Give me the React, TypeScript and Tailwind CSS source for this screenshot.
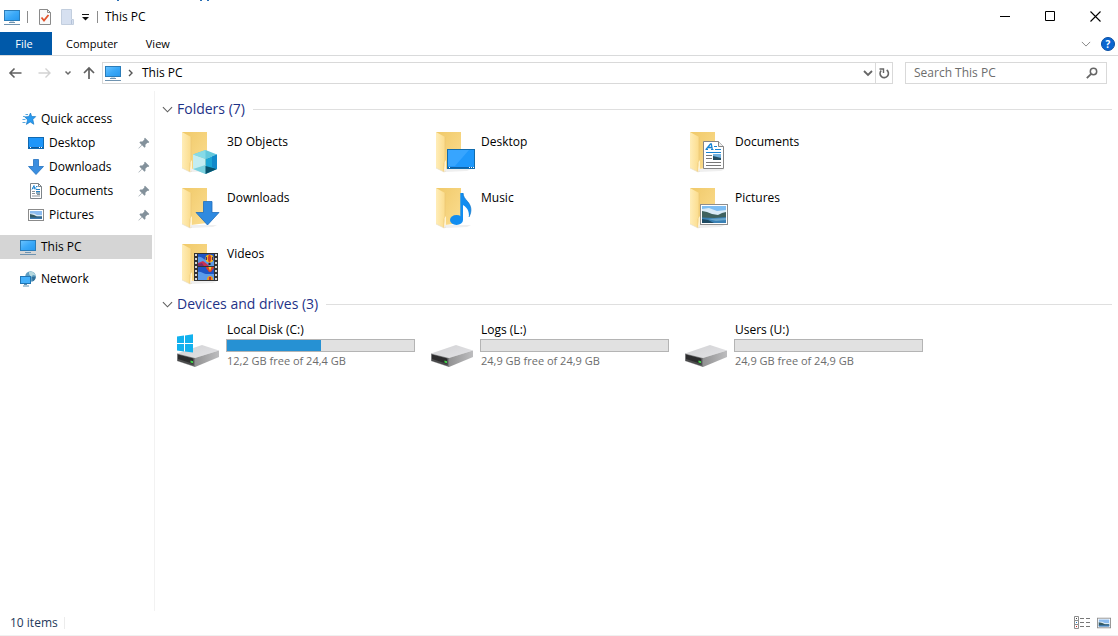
import React from "react";

type IconProps = { className?: string };

function Monitor({ className = "w-4 h-4" }: IconProps) {
  return (
    <svg viewBox="0 0 16 16" className={className} aria-hidden="true">
      <defs>
        <linearGradient id="screen" x1="0" y1="0" x2="1" y2="1">
          <stop offset="0" stopColor="#6cc4ff" />
          <stop offset="0.5" stopColor="#3ba9f8" />
          <stop offset="1" stopColor="#2597ee" />
        </linearGradient>
      </defs>
      <rect x="0.5" y="1.5" width="15" height="10" fill="url(#screen)" stroke="#2b7cb8" />
      <path d="M5 13.5h6M0 15.5h16" stroke="#6f93b0" />
      <path d="M6 12.5h4" stroke="#c9dbe8" />
    </svg>
  );
}

function Star() {
  return (
    <svg viewBox="0 0 16 16" className="w-4 h-4" aria-hidden="true">
      <path d="M9.5 2l1.200 3.600h4L11.800 8.500l1 4.800-3.600-2.400-3.800 2.500 1.200-4.500-2.800-3 4-.3z" fill="#2a9bf0" stroke="#1878c4" strokeWidth="0.7" />
      <path d="M4.500 3.500h2.500M2 5.500h2M1.500 8.500h3M1.500 11.500h3" stroke="#5aa8de" />
    </svg>
  );
}

function DesktopSmall() {
  return (
    <svg viewBox="0 0 16 16" className="w-4 h-4" aria-hidden="true">
      <rect x="0.5" y="2.5" width="15" height="11" fill="#1e96fa" stroke="#1169b0" />
      <path d="M1 12.5h14" stroke="#10599a" />
      <path d="M2 12.5h1M11 12.5h1M13 12.5h1" stroke="#fff" />
    </svg>
  );
}

function DownloadSmall() {
  return (
    <svg viewBox="0 0 16 16" className="w-4 h-4" aria-hidden="true">
      <path d="M5.5.5h5v7h5L8 15.5.5 7.500h5z" fill="#3a8ee0" stroke="#2272c0" strokeWidth="0.8" />
    </svg>
  );
}

function DocumentSmall() {
  return (
    <svg viewBox="0 0 16 16" className="w-4 h-4" aria-hidden="true">
      <path d="M2.500.5h8l3 3v12h-11z" fill="#fff" stroke="#7d8489" />
      <path d="M10.500.5v3h3" fill="none" stroke="#7d8489" />
      <path d="M4 6.500L6 2.500l1 4M4.500 5h4M8 3.500h1.500" fill="none" stroke="#2187d4" />
      <path d="M4 8.500h3M4 10.500h3M4 13h8M9 11.500h3" stroke="#8a939a" />
      <path d="M8 6.500h4M8 8.500h4" stroke="#2583c5" />
      <path d="M8 10h4" stroke="#1a5578" />
    </svg>
  );
}

function PictureSmall({ className = "w-4 h-4" }: IconProps) {
  return (
    <svg viewBox="0 0 16 16" className={className} aria-hidden="true">
      <rect x="0.5" y="2.5" width="15" height="11" fill="#fff" stroke="#8b8b8b" />
      <path d="M2 4h12v8H2z" fill="#8cbcf0" />
      <path d="M2 6.500h4l3 1.500h5v1H2z" fill="#dbeaf4" />
      <path d="M2 7l4 1 3 1.500h5V11H2z" fill="#355a62" />
      <path d="M2 10.500h12V12H2z" fill="#3b78b0" />
    </svg>
  );
}

function NetworkIcon() {
  return (
    <svg viewBox="0 0 16 16" className="w-4 h-4" aria-hidden="true">
      <circle cx="10.500" cy="5.500" r="5.300" fill="#5f9dc0" />
      <path d="M9 .6c3-.8 6 1.400 6.600 4L13 4l-2 2-2-3z" fill="#b5d8df" />
      <path d="M12 6l3.700-.5c0 2-1 4-3 5z" fill="#316f99" />
      <rect x="0.500" y="5.500" width="10" height="7" fill="#45b1fb" stroke="#2176b4" />
      <path d="M4 13.500h3M3 15h6" stroke="#5e8fae" />
    </svg>
  );
}

function Pin() {
  return (
    <svg viewBox="0 0 12 12" className="w-3 h-3" aria-hidden="true">
      <path d="M7 .7L11.300 5l-1 .9-.9-.2-2 2 .1 2.100-1 .9-2.400-2.400L.8 11.600l-.4-.4 3.300-3.300L1.400 5.500l.9-1 2.100.1 2-2-.2-1z" fill="#83919b" />
    </svg>
  );
}

function Chevron({ className = "w-3 h-3 text-[#5f5f5f]" }: IconProps) {
  return (
    <svg viewBox="0 0 12 12" className={className} aria-hidden="true">
      <path d="M1 3.500l5 5 5-5" fill="none" stroke="currentColor" strokeWidth="1.200" />
    </svg>
  );
}

// Shared folder body, the child is drawn over its lower right corner
function Folder({ children }: { children: React.ReactNode }) {
  return (
    <svg viewBox="0 0 48 48" className="w-12 h-12 shrink-0" aria-hidden="true">
      <defs>
        <linearGradient id="folderBack" x1="0" y1="0" x2="1" y2="1">
          <stop offset="0" stopColor="#f0c969" />
          <stop offset="1" stopColor="#fbdd90" />
        </linearGradient>
        <linearGradient id="folderFront" x1="0" y1="0" x2="1" y2="0">
          <stop offset="0" stopColor="#ffedb8" />
          <stop offset="1" stopColor="#fbdc8c" />
        </linearGradient>
      </defs>
      <path d="M16 41h26l-4 2-22 1z" fill="#efefef" />
      <path d="M7 4h25v35l-16 2z" fill="url(#folderBack)" />
      <path d="M7 4l9 5v24l-1 2v9L7 40z" fill="url(#folderFront)" />
      <path d="M16 9v24l-1 2v9" fill="none" stroke="#e9c472" strokeWidth="0.600" />
      <path d="M15.500 34l1.500-2v9h-1.500z" fill="#fff3cf" />
      <path d="M7 40l8 4 2-1" fill="none" stroke="#e4dcc8" strokeWidth="0.600" />
      {children}
    </svg>
  );
}

function CubeArt() {
  return (
    <>
      <path d="M18 26.500L30.500 22 42 26.500 30.500 31z" fill="#63c8dc" />
      <path d="M18 26.500L30.500 31v15L18 41z" fill="#c3edf2" />
      <path d="M42 26.500L30.500 31v15L42 41z" fill="#1ba5d5" />
      <path d="M18 26.500L30.500 22v9z" fill="#86dae7" />
      <path d="M18 41l12.500-4v9z" fill="#7bd1df" />
      <path d="M30.500 38L42 41l-11.500 5z" fill="#07536d" />
      <path d="M37 28.500l5-2V41l-5-2z" fill="#1289ca" />
    </>
  );
}

function DesktopArt() {
  return (
    <>
      <rect x="18.500" y="21.500" width="27" height="19" fill="#1f98fb" stroke="#116cad" />
      <path d="M19 22h21L26 38h-7z" fill="#37a5ff" />
      <path d="M19 39.500h26" stroke="#0d61a8" />
      <path d="M20 39.500h1M40 39.500h1M42 39.500h1M44 39.500h1" stroke="#fff" />
    </>
  );
}

function DocumentArt() {
  return (
    <>
      <path d="M20.500 13.500h15l5 5v22h-20z" fill="#fff" stroke="#858585" />
      <path d="M35.500 13.500v5h5" fill="#eee" stroke="#858585" />
      <path d="M23 21.500l4.500-5.500h.8l1 5.500M25 19.500h4" fill="none" stroke="#1683d3" strokeWidth="1.300" />
      <path d="M22.500 21.500h2.500M28 21.500h2.500M31 18.500h3M32 21.500h6M23 24.500h15" stroke="#1683d3" />
      <path d="M23 27.500h6M23 30.500h6M23 34.500h15M23 37.500h15" stroke="#777" />
      <path d="M30 26h8v6h-8z" fill="#72b2df" />
      <path d="M30 28l4 1 4 1v2h-8z" fill="#254e62" />
    </>
  );
}

function DownloadArt() {
  return (
    <path d="M28.500 17.500h8.500v11h7L32.500 41 21 28.500h7.500z" fill="#2f8ae0" stroke="#1e6dbc" strokeWidth="0.800" />
  );
}

function MusicArt() {
  return (
    <>
      <ellipse cx="27.500" cy="36" rx="6.500" ry="5" fill="#128df0" />
      <path d="M31.300 9H34c.3 4 2 5.500 4.500 8.500 3.500 4 4.800 9 1.500 15.500 0-5-.5-8.500-6-12v15h-2.700z" fill="#128df0" />
      <path d="M34 9c.3 4 2 5.500 4.500 8.500 3.500 4 4.800 9 1.500 15.500" fill="none" stroke="#0970c4" strokeWidth="0.700" />
    </>
  );
}

function PictureArt() {
  return (
    <>
      <rect x="17.500" y="20.500" width="27" height="20" fill="#fff" stroke="#8d8d8d" />
      <path d="M19 22h24v17H19z" fill="#7dbdf2" />
      <path d="M19 25l7-1 8 3 9-1v6H19z" fill="#d9ebf8" />
      <path d="M19 27l5 1 5 2 6 1 4-2 4-1v6H19z" fill="#3f625f" />
      <path d="M19 33.500l12 .5 12-1v6H19z" fill="#3a80b4" />
      <path d="M25 35l18-1v2l-10 1z" fill="#6aa6cc" />
      <path d="M19 35l6 1 6 3H19z" fill="#1d4a63" />
    </>
  );
}

function VideoArt() {
  return (
    <>
      <path d="M19 13h24v28H19z" fill="#333" />
      <path d="M21 14v27M41 14v27" stroke="#d6d6d6" strokeWidth="2" strokeDasharray="2 2" />
      <path d="M23 14h16v12H23zM23 27h16v13H23z" fill="#1f55c4" />
      <path d="M23 17c4-1 5 3 9 3l7 1v5H23z" fill="#5b9bea" />
      <path d="M23 32c3-1 5 2 8 2h8v6H23z" fill="#5b9bea" />
      <path d="M23 23l5-2 4 3 2 2H23z" fill="#c93050" />
      <path d="M23 24l4-1 2 3h-6z" fill="#7b2a6c" />
      <ellipse cx="34.500" cy="18.500" rx="4" ry="4" fill="#efb521" />
      <path d="M34 14.500c-1.500 2.500-1.500 5.500 0 8h1c1.500-2.500 1.500-5.500 0-8z" fill="#d63b25" />
      <path d="M31.500 17v3M37.500 17v3" stroke="#4a2b64" />
      <path d="M33.500 23h2v2h-2z" fill="#312015" />
      <path d="M31 27h8c0 2-2 3-3 5h-2c-1-2-3-3-3-5z" fill="#d9402c" />
      <path d="M33.500 27h3L35 31z" fill="#f2ce2b" />
      <path d="M32 39c0-4 6-4 6 0v1h-6z" fill="#e59a20" />
      <path d="M34 37h2v3h-2z" fill="#c92f28" />
    </>
  );
}

function Drive({ system }: { system?: boolean }) {
  return (
    <svg viewBox="0 0 48 48" className="w-12 h-12 shrink-0" aria-hidden="true">
      <defs>
        <linearGradient id="driveTop" x1="0" y1="0" x2="1" y2="1">
          <stop offset="0" stopColor="#d2d2d4" />
          <stop offset="1" stopColor="#e3e3e6" />
        </linearGradient>
        <linearGradient id="driveSide" x1="0" y1="0" x2="1" y2="0">
          <stop offset="0" stopColor="#929293" />
          <stop offset="1" stopColor="#bdbdbf" />
        </linearGradient>
      </defs>
      <path d="M2 31.500L27 23l17 5.500L20 36z" fill="url(#driveTop)" />
      <path d="M20 36l24-7.500V35L20 45z" fill="url(#driveSide)" />
      <path d="M2 31.500L20 36v9L2 39z" fill="#77787a" />
      <path d="M3 32.500l15.500 4v7L3 38.500z" fill="#2c2c2d" />
      <path d="M3 37l15.500 5v1.500L3 38.500z" fill="#4d4d4e" />
      <path d="M15.500 38.500l2.500.7v2l-2.500-.7z" fill="#42d94b" />
      {system && (
        <path d="M2 14.500l7-1V21H2zM10 13.400l8-1.200V21h-8zM2 22h7v7.500l-7-1zM10 22h8v8.500l-8-1z" fill="#12b1ee" />
      )}
    </svg>
  );
}

const QUICK_ACCESS = [
  { name: "Desktop", icon: <DesktopSmall /> },
  { name: "Downloads", icon: <DownloadSmall /> },
  { name: "Documents", icon: <DocumentSmall /> },
  { name: "Pictures", icon: <PictureSmall /> },
];

const FOLDERS = [
  { name: "3D Objects", art: <CubeArt /> },
  { name: "Desktop", art: <DesktopArt /> },
  { name: "Documents", art: <DocumentArt /> },
  { name: "Downloads", art: <DownloadArt /> },
  { name: "Music", art: <MusicArt /> },
  { name: "Pictures", art: <PictureArt /> },
  { name: "Videos", art: <VideoArt /> },
];

const DRIVES = [
  { name: "Local Disk (C:)", info: "12,2 GB free of 24,4 GB", used: 50, system: true },
  { name: "Logs (L:)", info: "24,9 GB free of 24,9 GB", used: 0, system: false },
  { name: "Users (U:)", info: "24,9 GB free of 24,9 GB", used: 0, system: false },
];

function TitleBar() {
  return (
    <header className="relative flex h-8 items-center">
      <svg viewBox="0 0 220 2" className="absolute left-0 top-0 h-0.5 w-[220px]" aria-hidden="true">
        <path d="M117 0h2v1h-2zM200 0h2v1h-2zM207 0h2v1h-2z" fill="#2a6fb5" />
      </svg>
      <div className="flex flex-1 items-center pt-px pl-1">
        <Monitor />
        <span className="ml-[7px] h-3 w-px bg-[#8c8c8c]" />
        <button aria-label="Properties" className="ml-[11px]">
          <svg viewBox="0 0 12 16" className="h-4 w-3">
            <path d="M.5.5h8l3 3v12H.5z" fill="#fafafa" stroke="#8a8a8a" />
            <path d="M8.500.5v3h3" fill="none" stroke="#8a8a8a" />
            <path d="M2.500 8.500l2.500 3 4.500-5.500" fill="none" stroke="#e2532b" strokeWidth="1.800" />
          </svg>
        </button>
        <button aria-label="New folder" className="ml-[10px]">
          <svg viewBox="0 0 13 16" className="h-4 w-[13px]">
            <path d="M.5.5h10v10h2v5H.5z" fill="#d6e0f0" stroke="#c2cede" />
            <path d="M10.500 11v4" stroke="#b4c2d8" />
          </svg>
        </button>
        <button aria-label="Customize Quick Access Toolbar" className="ml-2">
          <svg viewBox="0 0 7 8" className="h-2 w-[7px]">
            <path d="M0 1.500h7" stroke="#111" />
            <path d="M0 4h7L3.500 7.500z" fill="#111" />
          </svg>
        </button>
        <span className="ml-2 h-3 w-px bg-[#8c8c8c]" />
        <h1 className="ml-[7px]">This PC</h1>
      </div>
      <button aria-label="Minimize" className="flex h-8 w-[45px] items-center justify-center">
        <svg viewBox="0 0 11 11" className="h-[11px] w-[11px]"><path d="M0 5.500h10" stroke="#000" /></svg>
      </button>
      <button aria-label="Maximize" className="flex h-8 w-[45px] items-center justify-center">
        <svg viewBox="0 0 11 11" className="h-[11px] w-[11px]"><path d="M.5.5h9v9h-9z" fill="none" stroke="#000" /></svg>
      </button>
      <button aria-label="Close" className="flex h-8 w-[45px] items-center justify-center">
        <svg viewBox="0 0 11 11" className="h-[11px] w-[11px]"><path d="M.5.5l10 10M10.500.5l-10 10" stroke="#000" strokeWidth="1.100" /></svg>
      </button>
    </header>
  );
}

function Ribbon() {
  return (
    <nav className="flex h-6 items-center border-b border-[#d9dadb] text-[11px]">
      <button className="h-full w-[52px] bg-[#0059a9] pr-1 text-white">File</button>
      <button className="ml-[14px]">Computer</button>
      <button className="ml-7">View</button>
      <div className="ml-auto flex items-center gap-[10px] pr-[3px]">
        <button aria-label="Expand the Ribbon">
          <Chevron className="h-[10px] w-[10px] text-[#8a8a8a]" />
        </button>
        <button aria-label="Help" className="h-[14px] w-[14px] rounded-full border border-[#0a4fa3] bg-[#0b66d0] text-[10px] leading-3 font-bold text-white">
          ?
        </button>
      </div>
    </nav>
  );
}

function AddressBar() {
  return (
    <div className="flex h-[34px] items-center pr-[11px] pl-2 text-[#666]">
      <button aria-label="Back">
        <svg viewBox="0 0 14 14" className="h-[14px] w-[14px]"><path d="M13.500 7H2M6.500 2.500L2 7l4.500 4.500" fill="none" stroke="#606060" strokeWidth="1.600" /></svg>
      </button>
      <button aria-label="Forward" className="ml-4" disabled>
        <svg viewBox="0 0 14 14" className="h-[14px] w-[14px]"><path d="M.5 7H12M7.500 2.500L12 7l-4.500 4.500" fill="none" stroke="#d2d2d2" strokeWidth="1.400" /></svg>
      </button>
      <button aria-label="Recent locations" className="ml-3">
        <svg viewBox="0 0 8 8" className="h-2 w-2"><path d="M1.500 2.500L4 5l2.500-2.500" fill="none" stroke="#686868" strokeWidth="1.500" /></svg>
      </button>
      <button aria-label="Up" className="ml-[10px]">
        <svg viewBox="0 0 14 14" className="h-[14px] w-[14px]"><path d="M7 13V2M2 7l5-5 5 5" fill="none" stroke="#606060" strokeWidth="1.700" /></svg>
      </button>
      <div className="ml-[6px] flex h-[22px] flex-1 items-center border border-[#d9d9d9]">
        <Monitor className="ml-[2px] h-4 w-4" />
        <svg viewBox="0 0 8 8" className="ml-[6px] h-2 w-2" aria-hidden="true"><path d="M2 1l3 3-3 3" fill="none" stroke="#555" strokeWidth="1.400" /></svg>
        <button className="ml-[7px] text-black">This PC</button>
        <button aria-label="Previous locations" className="mr-[2px] ml-auto">
          <svg viewBox="0 0 10 10" className="h-[10px] w-[10px]"><path d="M1 3l4 4 4-4" fill="none" stroke="#666" strokeWidth="1.800" /></svg>
        </button>
        <button aria-label="Refresh" className="flex h-full w-[17px] items-center justify-center border-l border-[#d9d9d9]">
          <svg viewBox="0 0 12 12" className="h-3 w-3">
            <path d="M8.700 3A4.200 4.200 0 1 1 3.200 3.500" fill="none" stroke="#666" strokeWidth="1.600" />
            <path d="M1.500 2h4v4" fill="none" stroke="#666" strokeWidth="1.400" />
          </svg>
        </button>
      </div>
      <label className="ml-3 flex h-[22px] w-[202px] items-center border border-[#d9d9d9] pr-2 pl-2">
        <input
          type="text"
          aria-label="Search This PC"
          placeholder="Search This PC"
          className="min-w-0 flex-1 outline-none placeholder:text-[#6d6d6d]"
        />
        <svg viewBox="0 0 12 12" className="h-3 w-3" aria-hidden="true">
          <circle cx="7.500" cy="4.500" r="3.200" fill="none" stroke="#666" strokeWidth="1.500" />
          <path d="M5.200 6.800L.8 11.200" stroke="#666" strokeWidth="1.800" />
        </svg>
      </label>
    </div>
  );
}

function Sidebar() {
  return (
    <aside className="w-[155px] shrink-0 border-r border-[#f2f2f2] pt-4 pr-[2px]">
      <button className="flex h-6 w-full items-center gap-1 pl-[21px]">
        <Star />
        Quick access
      </button>
      <ul>
        {QUICK_ACCESS.map((item) => (
          <li key={item.name}>
            <button className="flex h-6 w-full items-center gap-[5px] pr-[2px] pl-7">
              {item.icon}
              <span className="flex-1 text-left">{item.name}</span>
              <Pin />
            </button>
          </li>
        ))}
      </ul>
      <button className="mt-2 flex h-6 w-full items-center gap-[5px] bg-[#d5d5d5] pl-5">
        <Monitor />
        This PC
      </button>
      <button className="mt-2 flex h-6 w-full items-center gap-[5px] pl-5">
        <NetworkIcon />
        Network
      </button>
    </aside>
  );
}

function GroupHeader({ title }: { title: string }) {
  return (
    <div className="flex h-6 items-center">
      <button className="flex items-center gap-1 text-sm text-[#1e3287]">
        <Chevron className="h-[11px] w-[11px] text-[#5f5f5f]" />
        <h2>{title}</h2>
      </button>
      <span className="ml-2 h-px flex-1 bg-[#dfdfdf]" />
    </div>
  );
}

export default function App() {
  return (
    <div className="flex min-h-screen flex-col border-b border-[#f0f0f0] bg-white font-['Open_Sans','Noto_Sans',sans-serif] text-xs leading-4 text-black">
      <TitleBar />
      <Ribbon />
      <AddressBar />

      <div className="flex flex-1 pt-px">
        <Sidebar />
        <main className="min-w-0 flex-1 pt-[6px] pr-[6px] pl-[7px]">
          <GroupHeader title="Folders (7)" />
          <ul className="mt-[7px] grid max-w-[776px] grid-cols-[repeat(auto-fill,254px)] pl-[13px]">
            {FOLDERS.map((folder) => (
              <li key={folder.name} className="flex h-14 gap-1">
                <Folder>{folder.art}</Folder>
                <span className="mt-[6px]">{folder.name}</span>
              </li>
            ))}
          </ul>

          <div className="-mt-1">
            <GroupHeader title="Devices and drives (3)" />
          </div>
          <ul className="mt-[6px] grid max-w-[776px] grid-cols-[repeat(auto-fill,254px)] pl-[13px]">
            {DRIVES.map((drive) => (
              <li key={drive.name} className="flex gap-[3px]">
                <Drive system={drive.system} />
                <div className="w-[189px]">
                  <div className="pl-px">{drive.name}</div>
                  <div className="mt-px h-[13px] border border-[#b4b4b4] bg-[#e1e1e1]">
                    <div className="h-full bg-[#2691d3]" style={{ width: `${drive.used}%` }} />
                  </div>
                  <div className="mt-px pl-px text-[11px] text-[#6d6d6d]">{drive.info}</div>
                </div>
              </li>
            ))}
          </ul>
        </main>
      </div>

      <footer className="flex h-6 items-center pr-[7px] pl-[10px] text-[#1e395b]">
        <span>10 items</span>
        <span className="ml-[6px] h-3 w-px bg-[#ececec]" />
        <div className="ml-auto flex items-center gap-[6px]">
          <button aria-label="Details view">
            <svg viewBox="0 0 17 14" className="h-[14px] w-[17px]">
              <path d="M.5.5h4v4h-4zM.5 4.500h4v4h-4zM.5 8.500h4v4h-4z" fill="#fff" stroke="#8d8d8d" />
              <path d="M6 2.500h4M12 2.500h4M6 6.500h4M12 6.500h4M6 10.500h4M12 10.500h4" stroke="#777" />
              <path d="M2 2.500h1" stroke="#444" />
              <path d="M2 6.500h1" stroke="#1d7fd0" />
              <path d="M2 10.500h1" stroke="#c22" />
            </svg>
          </button>
          <button aria-label="Large icons view">
            <PictureSmall className="h-[14px] w-[14px]" />
          </button>
        </div>
      </footer>
    </div>
  );
}
